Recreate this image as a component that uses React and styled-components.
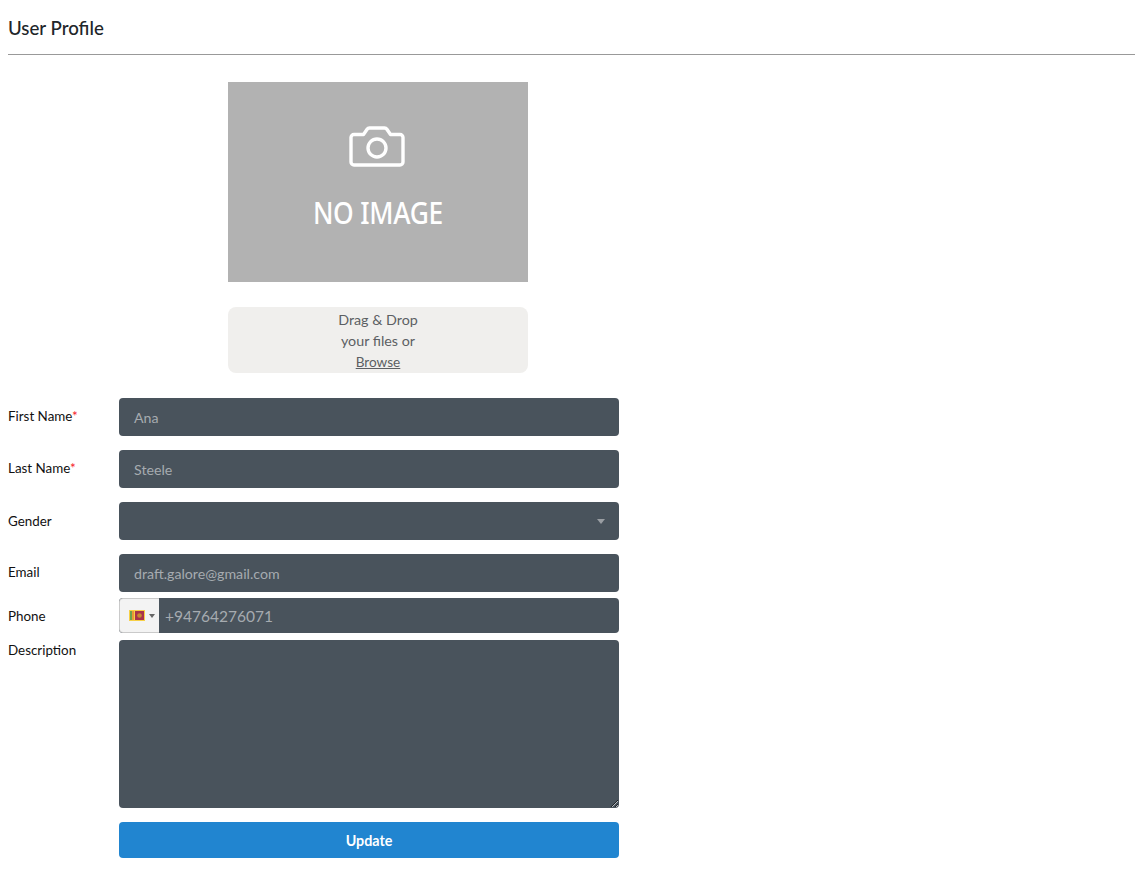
import React from 'react';
import styled, { createGlobalStyle } from 'styled-components';

const GlobalStyle = createGlobalStyle`
  html, body {
    margin: 0;
    padding: 0;
    background: #fff;
    font-family: Lato, "Liberation Sans", sans-serif;
  }
  * { box-sizing: border-box; }
`;

const Page = styled.div`
  padding: 0 10px 0 8px;
  height: 889px;
  overflow: hidden;
`;

const Title = styled.h1`
  margin: 0;
  height: 54px;
  padding-top: 17px;
  font-size: 18.7px;
  line-height: 22px;
  font-weight: 500;
  color: #212529;
`;

const Divider = styled.hr`
  margin: 0;
  border: 0;
  height: 1px;
  background: #999;
`;

const Uploader = styled.div`
  width: 300px;
  margin: 27px 0 25px 220px;
  display: flex;
  flex-direction: column;
  gap: 25px;
`;

const Placeholder = styled.div`
  height: 200px;
  background: #b2b2b2;
  display: flex;
  flex-direction: column;
  align-items: center;
  padding-top: 43px;
  color: #fff;
`;

const Camera = styled.svg`
  margin-right: 2px;
`;

const NoImage = styled.div`
  margin-top: 27px;
  font-family: "Noto Sans", "Open Sans", sans-serif;
  font-size: 30px;
  line-height: 38px;
  font-weight: 500;
  letter-spacing: -0.3px;
  transform: scaleX(0.88);
`;

const DropZone = styled.div`
  height: 66px;
  background: #f0efed;
  border-radius: 8px;
  padding-top: 2px;
  text-align: center;
  font-size: 14.3px;
  line-height: 21px;
  color: #5c5f63;
`;

const Browse = styled.span`
  display: block;
  font-size: 13.6px;
  line-height: 22px;
  text-decoration: underline;
`;

const Form = styled.form`
  display: flex;
  flex-direction: column;
  width: 611px;
`;

const Row = styled.div`
  display: grid;
  grid-template-columns: 111px 500px;
  align-items: ${p => (p.$top ? 'start' : 'center')};
  margin-bottom: ${p => p.$gap}px;
`;

const Label = styled.label`
  font-size: 13.4px;
  line-height: 20px;
  color: #111;
  transform: translateY(${p => p.$shift || 0}px);
`;

const Required = styled.span`
  color: #f5222d;
`;

const Field = styled.div`
  position: relative;
  height: 38px;
  padding: 0 15px;
  display: flex;
  align-items: center;
  background: #49535c;
  border-radius: 4px;
  font-size: 14.2px;
  color: #a6abb0;
`;

const Caret = styled.span`
  position: absolute;
  right: 14px;
  top: 17px;
  border-style: solid;
  border-width: 5px 4.5px 0;
  border-color: #9a9ea3 transparent transparent;
`;

const PhoneGroup = styled.div`
  height: 35px;
  display: flex;
  background: #49535c;
  border-radius: 4px;
  overflow: hidden;
`;

const FlagButton = styled.div`
  width: 40px;
  display: flex;
  align-items: center;
  gap: 4px;
  padding-left: 9px;
  background: #f3f3f3;
  border: 1px solid #cacaca;
  border-right: 0;
  border-radius: 4px 0 0 4px;
`;

const FlagCaret = styled.span`
  border-style: solid;
  border-width: 4px 3px 0;
  border-color: #666 transparent transparent;
`;

const PhoneNumber = styled.div`
  flex: 1;
  padding-left: 6px;
  display: flex;
  align-items: center;
  font-size: 15.5px;
  color: #a6abb0;
`;

const TextArea = styled.textarea`
  display: block;
  width: 500px;
  height: 168px;
  padding: 8px 15px;
  border: 0;
  border-radius: 4px;
  background: #49535c;
  color: #a6abb0;
  font: inherit;
  resize: vertical;
`;

const SubmitButton = styled.button`
  grid-column: 2;
  height: 36px;
  border: 0;
  border-radius: 4px;
  background: #2185d0;
  color: #fff;
  font-family: inherit;
  font-size: 14.3px;
  font-weight: 700;
`;

const CameraIcon = () => (
  <Camera width="56" height="42" viewBox="0 0 56 42" fill="none" stroke="#fff" strokeWidth="3.4" strokeLinejoin="round">
    <path d="M5 9.5h9.5l3.6-5.2c.6-.9 1.4-1.3 2.4-1.3h15c1 0 1.8.4 2.4 1.3l3.6 5.2H51c1.700 0 3 1.300 3 3V37c0 1.700-1.300 3-3 3H5c-1.700 0-3-1.300-3-3V12.500c0-1.700 1.300-3 3-3z" />
    <circle cx="28" cy="23" r="9" />
  </Camera>
);

const SriLankaFlag = () => (
  <svg width="16" height="11" viewBox="0 0 16 11">
    <rect width="16" height="11" fill="#f7d046" />
    <rect x="1" y="1" width="2" height="9" fill="#6fa24c" />
    <rect x="3" y="1" width="2" height="9" fill="#e89a35" />
    <rect x="6" y="1" width="9" height="9" fill="#a8324a" />
    <circle cx="10.500" cy="5.500" r="2.300" fill="#c98a2e" />
  </svg>
);

const App = () => (
  <Page>
    <GlobalStyle />
    <Title>User Profile</Title>
    <Divider />
    <Uploader>
      <Placeholder>
        <CameraIcon />
        <NoImage>NO IMAGE</NoImage>
      </Placeholder>
      <DropZone>
        Drag &amp; Drop
        <br />
        your files or
        <Browse>Browse</Browse>
      </DropZone>
    </Uploader>
    <Form>
      <Row $gap={14}>
        <Label $shift={-1}>First Name<Required>*</Required></Label>
        <Field>Ana</Field>
      </Row>
      <Row $gap={14}>
        <Label $shift={-1}>Last Name<Required>*</Required></Label>
        <Field>Steele</Field>
      </Row>
      <Row $gap={14}>
        <Label>Gender</Label>
        <Field><Caret /></Field>
      </Row>
      <Row $gap={6}>
        <Label $shift={-1}>Email</Label>
        <Field>draft.galore@gmail.com</Field>
      </Row>
      <Row $gap={7}>
        <Label>Phone</Label>
        <PhoneGroup>
          <FlagButton>
            <SriLankaFlag />
            <FlagCaret />
          </FlagButton>
          <PhoneNumber>+94764276071</PhoneNumber>
        </PhoneGroup>
      </Row>
      <Row $top $gap={14}>
        <Label>Description</Label>
        <TextArea />
      </Row>
      <Row $gap={0}>
        <SubmitButton type="button">Update</SubmitButton>
      </Row>
    </Form>
  </Page>
);

export default App;
